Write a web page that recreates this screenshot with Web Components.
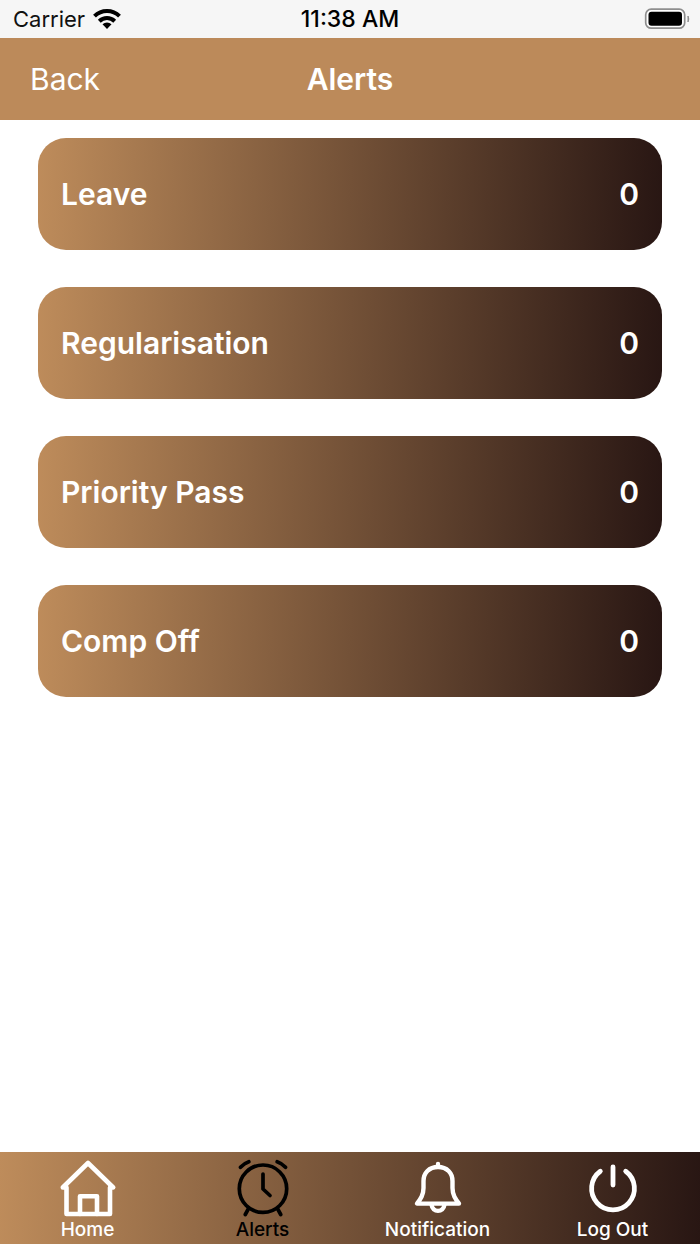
<!DOCTYPE html>
<html lang="en">
<head>
<meta charset="utf-8">
<meta name="viewport" content="width=device-width, initial-scale=1">
<title>Alerts</title>
<style>
  html, body {
    height: 100%;
  }

  body {
    --tan: #bc8a5a;
    --fade: linear-gradient(92deg, #be8c5b 0%, #281613 100%);
    margin: 0;
    background: #fff;
    font-family: Inter, "Liberation Sans", sans-serif;
  }
</style>
</head>
<body>
<alerts-app></alerts-app>

<script>
class StatusBar extends HTMLElement {
  constructor() {
    super();
    this.attachShadow({ mode: "open" });
  }

  connectedCallback() {
    this.shadowRoot.innerHTML = `
    <style>
      :host {
        display: grid;
        grid-template-columns: 1fr auto 1fr;
        align-items: center;
        height: 38px;
        padding: 0 10px;
        background: #f6f6f6;
        color: #111;
        font-size: 22px;
      }

      .carrier {
        display: flex;
        align-items: center;
        gap: 8px;
        padding-left: 3px;
      }

      .time {
        color: #000;
        font-size: 23px;
        font-weight: 500;
      }

      svg {
        display: block;
      }

      .battery {
        justify-self: end;
      }
    </style>
    <div class="carrier">
      <span>${this.getAttribute("carrier")}</span>
      <svg width="28" height="22" viewBox="0 0 28 22" fill="none" stroke="#000" stroke-width="4" aria-hidden="true">
        <path d="M1.500 8.200A17.700 17.700 0 0 1 26.500 8.200" />
        <path d="M6.300 13.200A11 11 0 0 1 21.700 13.200" />
        <path d="M9.500 16.300A6.400 6.400 0 0 1 18.500 16.300L14 21Z" fill="#000" stroke="none" />
      </svg>
    </div>
    <span class="time">${this.getAttribute("time")}</span>
    <svg class="battery" width="46" height="22" viewBox="0 0 46 22" aria-hidden="true">
      <rect x="1.700" y="1.200" width="39" height="19" rx="5.500" fill="#fff" stroke="#8e8e8e" stroke-width="1.700" />
      <rect x="4.500" y="3.800" width="33.500" height="14" rx="3" fill="#000" />
      <path d="M44 8Q45.600 11 44 14Z" fill="#8e8e8e" stroke="#8e8e8e" />
    </svg>
  `;
  }
}

class NavHeader extends HTMLElement {
  constructor() {
    super();
    this.attachShadow({ mode: "open" });
  }

  connectedCallback() {
    this.shadowRoot.innerHTML = `
    <style>
      :host {
        display: grid;
        grid-template-columns: 1fr auto 1fr;
        align-items: center;
        height: 82px;
        padding: 0 30px;
        background: var(--tan);
        color: #fff;
        font-size: 30px;
      }

      button {
        justify-self: start;
        padding: 0;
        border: none;
        background: none;
        color: inherit;
        font: inherit;
        cursor: pointer;
      }

      h1 {
        margin: 0;
        font-size: inherit;
        font-weight: 600;
      }
    </style>
    <button type="button">Back</button>
    <h1><slot></slot></h1>
  `;
  }
}

class AlertCard extends HTMLElement {
  constructor() {
    super();
    this.attachShadow({ mode: "open" });
  }

  connectedCallback() {
    const count = this.getAttribute("count") || "0";

    this.shadowRoot.innerHTML = `
    <style>
      :host {
        display: block;
      }

      button {
        display: flex;
        align-items: center;
        justify-content: space-between;
        width: 100%;
        height: 112px;
        padding: 0 23px;
        border: none;
        border-radius: 28px;
        background: var(--fade);
        color: #fff;
        font: inherit;
        font-size: 30px;
        font-weight: 600;
        cursor: pointer;
      }
    </style>
    <button type="button">
      <slot></slot>
      <span>${count}</span>
    </button>
  `;
  }
}

const icons = {
  home: `
    <g stroke-width="4.600">
      <path d="M4.800 29.500L30 5L55.200 29.500H52V56H8.500V29.500Z" />
      <path d="M22 56V38.300H39V56" />
    </g>`,
  alarm: `
    <g stroke-width="3.700">
      <circle cx="30" cy="30.700" r="23.700" />
      <path d="M30 16V31L37 37.500" />
      <path d="M7.500 9.300Q11 5.300 15.800 3.700M52.500 9.300Q49 5.300 44.200 3.700" />
      <path d="M15 51.500L12.300 56.500M45 51.500L47.700 56.500" />
    </g>`,
  bell: `
    <g stroke-width="4.400">
      <path d="M30 6V9M30 9C21 9 15.500 15 15.500 23V30C15.500 37 12.500 41 9 45.600H51C47.500 41 44.500 37 44.500 30V23C44.500 15 39 9 30 9Z" />
      <path d="M23.500 46.500C24.500 55 35.500 55 36.500 46.500" />
    </g>`,
  power: `
    <g stroke-width="4.800">
      <path d="M17.300 13.200A21.400 21.400 0 1 0 42.700 13.200" />
      <path d="M30 9V27" />
    </g>`,
};

class TabItem extends HTMLElement {
  constructor() {
    super();
    this.attachShadow({ mode: "open" });
  }

  connectedCallback() {
    const icon = this.getAttribute("icon");
    const current = this.hasAttribute("selected") ? 'aria-current="page"' : "";

    this.shadowRoot.innerHTML = `
    <style>
      :host {
        display: block;
      }

      a {
        display: flex;
        flex-direction: column;
        align-items: center;
        color: #fff;
        font-size: 19px;
        font-weight: 500;
        line-height: 24px;
        text-decoration: none;
      }

      a[aria-current] {
        color: #000;
      }

      svg {
        display: block;
        fill: none;
        stroke: currentColor;
        stroke-linecap: round;
        stroke-linejoin: round;
      }
    </style>
    <a href="#${icon}" ${current}>
      <svg width="60" height="60" viewBox="0 0 60 60" aria-hidden="true">${icons[icon]}</svg>
      <slot></slot>
    </a>
  `;
  }
}

class TabBar extends HTMLElement {
  constructor() {
    super();
    this.attachShadow({ mode: "open" });
  }

  connectedCallback() {
    this.shadowRoot.innerHTML = `
    <style>
      :host {
        display: block;
        background: var(--fade);
      }

      nav {
        display: grid;
        grid-template-columns: repeat(4, 1fr);
        padding: 6px 0 2px;
      }
    </style>
    <nav><slot></slot></nav>
  `;
  }
}

class AlertsApp extends HTMLElement {
  constructor() {
    super();
    this.attachShadow({ mode: "open" });
  }

  connectedCallback() {
    this.shadowRoot.innerHTML = `
    <style>
      :host {
        display: flex;
        flex-direction: column;
        min-height: 100%;
      }

      main {
        display: flex;
        flex: 1;
        flex-direction: column;
        gap: 37px;
        padding: 18px 38px;
      }
    </style>
    <status-bar carrier="Carrier" time="11:38 AM"></status-bar>
    <nav-header>Alerts</nav-header>
    <main>
      <alert-card count="0">Leave</alert-card>
      <alert-card count="0">Regularisation</alert-card>
      <alert-card count="0">Priority Pass</alert-card>
      <alert-card count="0">Comp Off</alert-card>
    </main>
    <tab-bar>
      <tab-item icon="home">Home</tab-item>
      <tab-item icon="alarm" selected>Alerts</tab-item>
      <tab-item icon="bell">Notification</tab-item>
      <tab-item icon="power">Log Out</tab-item>
    </tab-bar>
  `;
  }
}

customElements.define("status-bar", StatusBar);
customElements.define("nav-header", NavHeader);
customElements.define("alert-card", AlertCard);
customElements.define("tab-item", TabItem);
customElements.define("tab-bar", TabBar);
customElements.define("alerts-app", AlertsApp);
</script>
</body>
</html>
